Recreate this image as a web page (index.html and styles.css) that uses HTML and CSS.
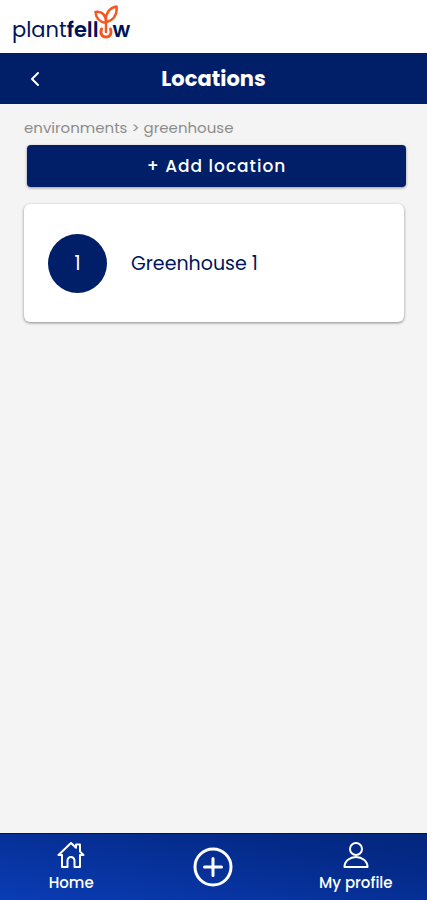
FILE: index.html
```html
<!DOCTYPE html>
<html lang="en">
<head>
<meta charset="utf-8">
<meta name="viewport" content="width=device-width, initial-scale=1">
<title>Locations</title>
<link rel="stylesheet" href="styles.css">
</head>
<body>
<header class="brand">
  <a class="logo" href="#"><span class="logo-light">plant</span><span class="logo-bold">fell</span><svg class="logo-pot" viewBox="0 0 24 34" aria-hidden="true"><path d="M12 27V14M12 18C5 17 2 13 1.500 7C8 6 12 10 12 17C11 9 15 3 22.500 1.500C23.500 9 20 15 12 17.500"/><path class="pot" d="M7.500 24C5.800 28.500 8 32 12 32S18.200 28.500 16.500 24"/></svg><span class="logo-bold">w</span></a>
</header>
<div class="title-bar">
  <button class="back" type="button" aria-label="Back"><svg viewBox="0 0 12 18" aria-hidden="true"><path d="M9 3L3 9L9 15"/></svg></button>
  <h1>Locations</h1>
</div>
<main>
  <nav class="breadcrumb" aria-label="Breadcrumb"><a href="#">environments</a> &gt; <a href="#">greenhouse</a></nav>
  <button class="add" type="button">+ Add location</button>
  <a class="card" href="#"><span class="badge">1</span><span class="name">Greenhouse 1</span></a>
</main>
<nav class="tabs" aria-label="Main">
  <a class="tab" href="#"><svg class="tab-icon" viewBox="0 0 28 28" aria-hidden="true"><path d="M1.500 14L14 2L19 6.800V3.500H23V10.600L26.500 14H23V26H17.500V19.500A3.500 3.500 0 0 0 10.500 19.500V26H5V14Z"/></svg><span>Home</span></a>
  <a class="tab" href="#" aria-label="Add"><svg class="plus-icon" viewBox="0 0 40 40" aria-hidden="true"><circle cx="20" cy="20" r="18"/><path d="M20 11.500V28.500M11.500 20H28.500"/></svg></a>
  <a class="tab" href="#"><svg class="tab-icon" viewBox="0 0 28 28" aria-hidden="true"><circle cx="14" cy="8" r="6"/><path d="M2.500 26C2.500 20 8 16 14 16S25.500 20 25.500 26Z"/></svg><span>My profile</span></a>
</nav>
</body>
</html>
```
FILE: styles.css
```css
* { box-sizing: border-box; }

body {
  margin: 0;
  min-height: 100vh;
  display: flex;
  flex-direction: column;
  background: #f4f4f4;
  color: #00145c;
  font-family: Poppins, Inter, sans-serif;
}

a { color: inherit; text-decoration: none; }
button { font: inherit; border: 0; cursor: pointer; }
svg { fill: none; stroke: currentColor; stroke-linecap: round; stroke-linejoin: round; }

.brand {
  height: 53px;
  padding: 5px 12px;
  background: #fff;
}
.logo {
  display: inline-flex;
  align-items: flex-end;
  font-size: 21px;
  line-height: 50px;
}
.logo-light { font-weight: 400; }
.logo-bold { font-weight: 600; }
.logo-pot {
  width: 24px;
  height: 34px;
  margin: 0 -5px 16px;
  color: #f4581f;
  stroke-width: 2.5;
}
.pot { stroke-width: 3; }

.title-bar {
  height: 51px;
  padding: 0 24px;
  display: grid;
  grid-template-columns: 24px 1fr 24px;
  align-items: center;
  background: #001f68;
  color: #fff;
}
.title-bar h1 {
  margin: 0;
  font-size: 21px;
  line-height: 32px;
  font-weight: 700;
  text-align: center;
}
.back {
  display: flex;
  padding: 0 5px;
  background: none;
  color: inherit;
}
.back svg { width: 12px; height: 18px; stroke-width: 2; }

main {
  flex: 1;
  padding: 12px 21px 24px 24px;
  display: flex;
  flex-direction: column;
}
.breadcrumb {
  font-size: 15px;
  line-height: 24px;
  color: #8c8c8c;
  margin-bottom: 5px;
}
.add {
  min-height: 42px;
  margin: 0 0 17px 3px;
  border-radius: 4px;
  background: #001f68;
  color: #fff;
  font-size: 17px;
  font-weight: 500;
  letter-spacing: 1px;
  box-shadow: 0 1px 3px rgba(0, 0, 0, 0.4);
}
.card {
  margin-right: 2px;
  padding: 30px 24px 29px;
  display: flex;
  align-items: center;
  gap: 24px;
  border-radius: 6px;
  background: #fff;
  box-shadow: 0 1px 3px rgba(0, 0, 0, 0.45);
}
.badge {
  width: 59px;
  height: 59px;
  display: grid;
  place-items: center;
  border-radius: 50%;
  background: #001f68;
  color: #fff;
  font-size: 19px;
}
.name { font-size: 19px; line-height: 30px; }

.tabs {
  min-height: 67px;
  display: grid;
  grid-template-columns: repeat(3, 1fr);
  border-top: 1px solid #000f68;
  background: linear-gradient(10deg, #0a3cb4, #042a88 75%, #03277c);
  color: #fff;
}
.tab {
  display: flex;
  flex-direction: column;
  align-items: center;
  justify-content: center;
  gap: 3px;
  font-size: 15px;
  line-height: 22px;
  font-weight: 500;
}
.tab-icon { width: 28px; height: 28px; stroke-width: 2; }
.plus-icon { width: 40px; height: 40px; stroke-width: 3; }
```
